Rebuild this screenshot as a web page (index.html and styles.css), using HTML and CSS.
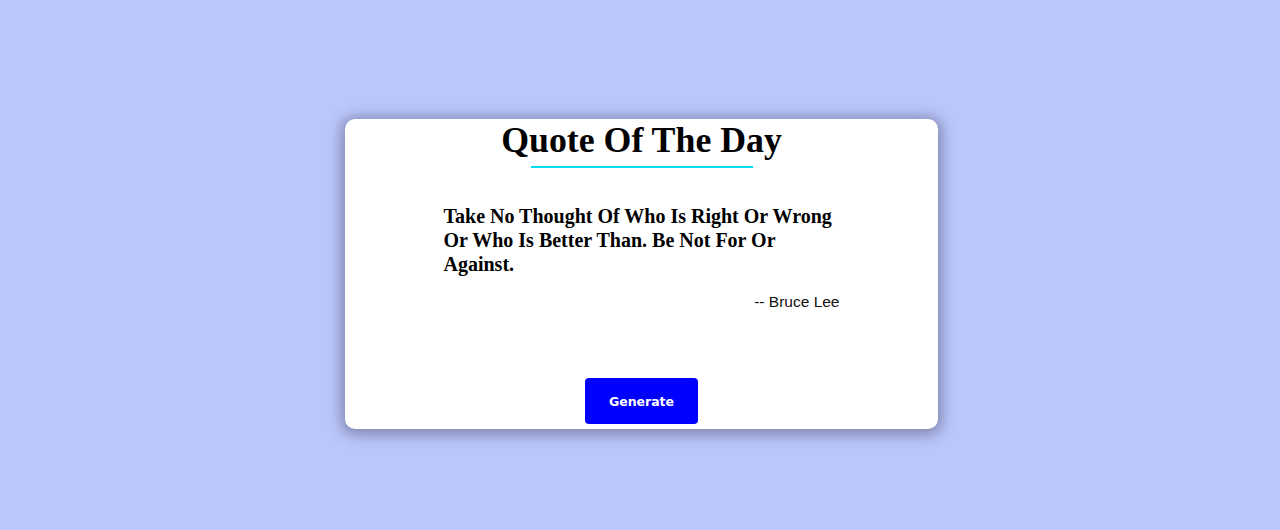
FILE: index.html
```html
<!DOCTYPE html>
<html>
<head>
<meta charset="utf-8">
<link rel="stylesheet" href="styles.css">
</head>
<body>
<div class="page">
  <div class="card">
    <h1 class="title">Quote Of The Day</h1>
    <div class="rule"></div>
    <div class="quote-box">
      <p class="quote">Take No Thought Of Who Is Right Or Wrong Or Who Is Better Than. Be Not For Or Against.</p>
      <p class="author">-- Bruce Lee</p>
    </div>
    <div class="actions">
      <button class="btn">Generate</button>
    </div>
  </div>
</div>
</body>
</html>
```
FILE: styles.css
```css
html, body {
  margin: 0;
  padding: 0;
}
body {
  background: #bbc7fb;
  width: 1280px;
  height: 530px;
  overflow: hidden;
}
.page {
  display: flex;
  justify-content: center;
  padding-top: 119px;
  padding-left: 3px;
}
.card {
  width: 593px;
  height: 310px;
  background: #fff;
  border-radius: 10px;
  box-shadow: 0 2px 14px 4px rgba(60, 60, 90, 0.45);
  box-sizing: border-box;
  display: flex;
  flex-direction: column;
  align-items: center;
}
.title {
  font-family: "Liberation Serif", serif;
  font-weight: bold;
  font-size: 35.8px;
  line-height: 40px;
  margin: 1px 0 0 0;
  color: #000;
}
.rule {
  width: 222px;
  height: 2px;
  background: #00d9f2;
  margin-top: 6px;
}
.quote-box {
  width: 396px;
  margin-top: 36px;
}
.quote {
  font-family: "Liberation Serif", serif;
  font-weight: bold;
  font-size: 20px;
  line-height: 24px;
  margin: 0;
  color: #000;
}
.author {
  font-family: "Liberation Sans", sans-serif;
  font-size: 15.5px;
  text-align: right;
  margin: 17px 0 0 0;
  color: #111;
}
.actions {
  margin-top: auto;
  padding-bottom: 5px;
}
.btn {
  width: 113px;
  height: 46px;
  background: #0000ff;
  color: #fff;
  border: none;
  border-radius: 4px;
  font-family: "DejaVu Sans", sans-serif;
  font-weight: bold;
  font-size: 12.5px;
}
```
